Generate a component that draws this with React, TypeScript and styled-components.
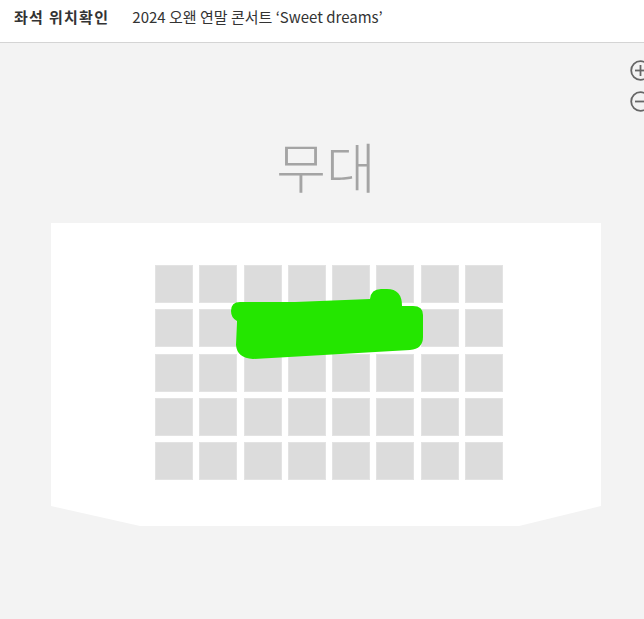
import React from "react";
import styled, { createGlobalStyle } from "styled-components";

const Global = createGlobalStyle`
  html, body { margin: 0; padding: 0; overflow: hidden; }
  body { font-family: "Noto Sans CJK KR", "Noto Sans", sans-serif; background: #f3f3f3; }
`;

const Page = styled.div`
  position: relative;
  width: 644px;
  height: 619px;
  overflow: hidden;
  background: #f3f3f3;
  display: flex;
  flex-direction: column;
`;

const Header = styled.header`
  height: 43px;
  background: #ffffff;
  border-bottom: 1px solid #d4d4d4;
  display: flex;
  align-items: flex-start;
  gap: 23px;
  padding: 6px 0 0 14px;
  box-sizing: border-box;
  flex-shrink: 0;
`;

const Title = styled.h1`
  margin: 0;
  font-size: 15px;
  line-height: 22px;
  font-weight: 700;
  letter-spacing: 1.3px;
  color: #333333;
`;

const Subtitle = styled.span`
  font-size: 15px;
  line-height: 22px;
  font-weight: 400;
  color: #333333;
`;

const Main = styled.main`
  position: relative;
  flex: 1;
  display: flex;
  flex-direction: column;
  align-items: center;
  padding-left: 8px;
`;

const ZoomControls = styled.div`
  position: absolute;
  top: 17px;
  left: 630px;
  display: flex;
  flex-direction: column;
  gap: 10px;
`;

const ZoomButton = styled.button`
  width: 21px;
  height: 21px;
  padding: 0;
  border: none;
  background: transparent;
  display: block;
  cursor: pointer;
`;

const StageLabel = styled.div`
  margin-top: 96px;
  font-size: 54px;
  line-height: 54px;
  font-weight: 300;
  color: #a4a4a4;
`;

const Hall = styled.section`
  position: relative;
  margin-top: 30px;
  width: 550px;
  height: 303px;
  background: #ffffff;
  clip-path: polygon(0 0, 100% 0, 100% 283px, 468px 100%, 89px 100%, 0 283px);
  box-sizing: border-box;
  padding: 42px 0 0 104px;
`;

const SeatGrid = styled.div`
  display: grid;
  grid-template-columns: repeat(8, 38px);
  grid-auto-rows: 38px;
  column-gap: 6.3px;
  row-gap: 6.3px;
`;

const Seat = styled.div`
  box-sizing: border-box;
  background: #dcdcdc;
  border: 1px solid #e3e3e3;
`;

const Scribble = styled.svg`
  position: absolute;
  left: 174px;
  top: 62px;
  overflow: visible;
`;

const CircleIcon = ({ minus }: { minus?: boolean }) => (
  <svg width="21" height="21" viewBox="0 0 21 21">
    <circle cx="10.5" cy="10.5" r="9.3" fill="none" stroke="#666" strokeWidth="1.8" />
    <line x1="5" y1="10.5" x2="16" y2="10.5" stroke="#666" strokeWidth="1.8" />
    {!minus && <line x1="10.5" y1="5" x2="10.5" y2="16" stroke="#666" strokeWidth="1.8" />}
  </svg>
);

export default function App() {
  const seats = Array.from({ length: 40 }, (_, i) => i);
  return (
    <Page>
      <Global />
      <Header>
        <Title>좌석 위치확인</Title>
        <Subtitle>2024 오왠 연말 콘서트 ‘Sweet dreams’</Subtitle>
      </Header>
      <Main>
        <ZoomControls>
          <ZoomButton aria-label="확대">
            <CircleIcon />
          </ZoomButton>
          <ZoomButton aria-label="축소">
            <CircleIcon minus />
          </ZoomButton>
        </ZoomControls>
        <StageLabel>무대</StageLabel>
        <Hall>
          <SeatGrid>
            {seats.map((s) => (
              <Seat key={s} />
            ))}
          </SeatGrid>
          <Scribble width="205" height="80" viewBox="0 0 205 80">
            <path
              d="M15 17 Q6 17 6 26 Q6 33 12 36 L11 60 Q12 73 28 74 L185 65 Q198 64 198 52 L198 30 Q198 21 188 21 L177 21 Q177 4 162 4 L156 4 Q146 4 145 14 L70 17 Z"
              fill="#24e600"
            />
          </Scribble>
        </Hall>
      </Main>
    </Page>
  );
}
